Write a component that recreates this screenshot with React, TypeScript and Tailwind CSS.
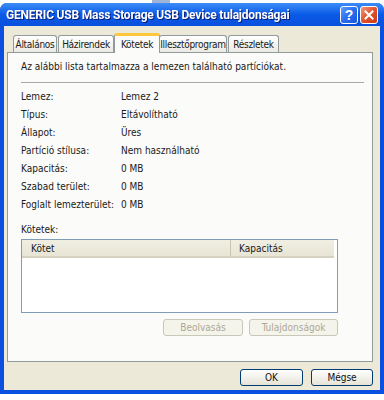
import React from 'react';

const tabs = [
  { label: 'Általános', w: 'w-[44px]' },
  { label: 'Házirendek', w: 'w-[56px]' },
  { label: 'Kötetek', w: 'w-[46px]', active: true },
  { label: 'Illesztőprogram', w: 'w-[68px]' },
  { label: 'Részletek', w: 'w-[51px]' },
];

const rows = [
  ['Lemez:', 'Lemez 2'],
  ['Típus:', 'Eltávolítható'],
  ['Állapot:', 'Üres'],
  ['Partíció stílusa:', 'Nem használható'],
  ['Kapacitás:', '0 MB'],
  ['Szabad terület:', '0 MB'],
  ['Foglalt lemezterület:', '0 MB'],
];

const TitleButton = ({ kind }: { kind: 'help' | 'close' }) => (
  <div
    className={
      'w-[18px] h-[18px] rounded-[3px] border border-white flex items-center justify-center ' +
      (kind === 'help'
        ? 'bg-gradient-to-br from-[#5d9bff] via-[#2a6ef0] to-[#1b54d8]'
        : 'bg-gradient-to-br from-[#f2957a] via-[#e2502c] to-[#c83a17]')
    }
  >
    {kind === 'help' ? (
      <span className="text-white font-bold text-[14px] leading-none font-['Liberation_Sans',sans-serif]">?</span>
    ) : (
      <svg width="10" height="10" viewBox="0 0 10 10">
        <path d="M1.5 1.5 L8.5 8.5 M8.5 1.5 L1.5 8.5" stroke="#fff" strokeWidth="2" strokeLinecap="square" />
      </svg>
    )}
  </div>
);

const XpButton = ({ label, w, disabled }: { label: string; w: string; disabled?: boolean }) => (
  <div
    className={
      'h-[17px] rounded-[3px] border flex items-center justify-center ' +
      w +
      (disabled
        ? ' border-[#c9c7ba] bg-[#f5f4ea] text-[#aca899]'
        : ' border-[#003c74] bg-gradient-to-b from-[#ffffff] to-[#e6e3d6] text-[#111]')
    }
  >
    {label}
  </div>
);

export default function App() {
  return (
    <div className="w-[384px] h-[400px] bg-white font-['DejaVu_Sans_Condensed','Liberation_Sans',sans-serif] text-[10px] text-[#1a1a1a] overflow-hidden">
      <div className="h-[3px] flex">
        <div className="ml-[152px] w-[18px] h-full bg-[#9fb4d8]" />
      </div>

      {/* window */}
      <div className="h-[391px] rounded-t-[7px] bg-[#0b4fe0] flex flex-col">
        {/* title bar */}
        <div className="h-[23px] rounded-t-[7px] bg-gradient-to-b from-[#3c8cf8] via-[#0a5ae8] to-[#0950dd] flex items-center pl-[6px] pr-[6px]">
          <span className="flex-1 text-white font-['Roboto',sans-serif] font-bold text-[12px] tracking-[-0.2px] drop-shadow-[1px_1px_0_#0a1e7a]">
            GENERIC USB Mass Storage USB Device tulajdonságai
          </span>
          <div className="flex gap-[2px]">
            <TitleButton kind="help" />
            <TitleButton kind="close" />
          </div>
        </div>

        {/* body */}
        <div className="flex-1 mx-[4px] mb-[4px] bg-[#ece9d8] flex flex-col">
          {/* tabs */}
          <div className="h-[26px] pt-[7px] pl-[9px] flex items-end tracking-[-0.3px]">
            {tabs.map((t) =>
              t.active ? (
                <div
                  key={t.label}
                  className={
                    'relative z-10 -mb-[1px] h-[20px] -mx-[1px] bg-[#fbfbf9] border border-b-0 border-[#919b9c] border-t-[3px] border-t-[#ffc83c] rounded-t-[3px] flex items-center justify-center pb-[1px] whitespace-nowrap ' +
                    t.w
                  }
                >
                  {t.label}
                </div>
              ) : (
                <div
                  key={t.label}
                  className={
                    'h-[17px] mr-[1px] bg-gradient-to-b from-[#ffffff] to-[#ebeae4] border border-b-0 border-[#919b9c] rounded-t-[3px] flex items-center justify-center whitespace-nowrap ' +
                    t.w
                  }
                >
                  {t.label}
                </div>
              )
            )}
          </div>

          {/* panel */}
          <div className="ml-[3px] w-[366px] h-[310px] border border-[#919b9c] bg-[#fbfbf9] pl-[13px] pr-[8px] pt-[7px] flex flex-col">
            <div className="leading-[14px]">Az alábbi lista tartalmazza a lemezen található partíciókat.</div>
            <div className="mt-[8px] h-[2px] border-t border-[#a7a6aa] border-b border-b-white" />

            <div className="mt-[3px] flex flex-col">
              {rows.map(([k, v]) => (
                <div key={k} className="h-[18px] flex items-center whitespace-nowrap">
                  <span className="w-[100px] shrink-0">{k}</span>
                  <span>{v}</span>
                </div>
              ))}
            </div>

            <div className="mt-[10px] leading-[14px]">Kötetek:</div>

            <div className="mt-[2px] w-[317px] h-[74px] border border-[#7f9db9] bg-white flex flex-col">
              <div className="h-[18px] flex bg-gradient-to-b from-[#f1efe2] to-[#e8e5d5] border-b-[2px] border-[#d6d2c2] mr-[3px]">
                <div className="w-[209px] pl-[9px] flex items-center border-r border-[#c7c5b2]">Kötet</div>
                <div className="flex-1 pl-[8px] flex items-center">Kapacitás</div>
              </div>
            </div>

            <div className="mt-[6px] w-[317px] flex justify-end gap-[6px]">
              <XpButton label="Beolvasás" w="w-[80px]" disabled />
              <XpButton label="Tulajdonságok" w="w-[89px]" disabled />
            </div>
          </div>

          {/* dialog buttons */}
          <div className="mt-[7px] w-[369px] flex justify-end gap-[8px]">
            <XpButton label="OK" w="w-[63px]" />
            <XpButton label="Mégse" w="w-[62px]" />
          </div>
        </div>
      </div>
    </div>
  );
}
